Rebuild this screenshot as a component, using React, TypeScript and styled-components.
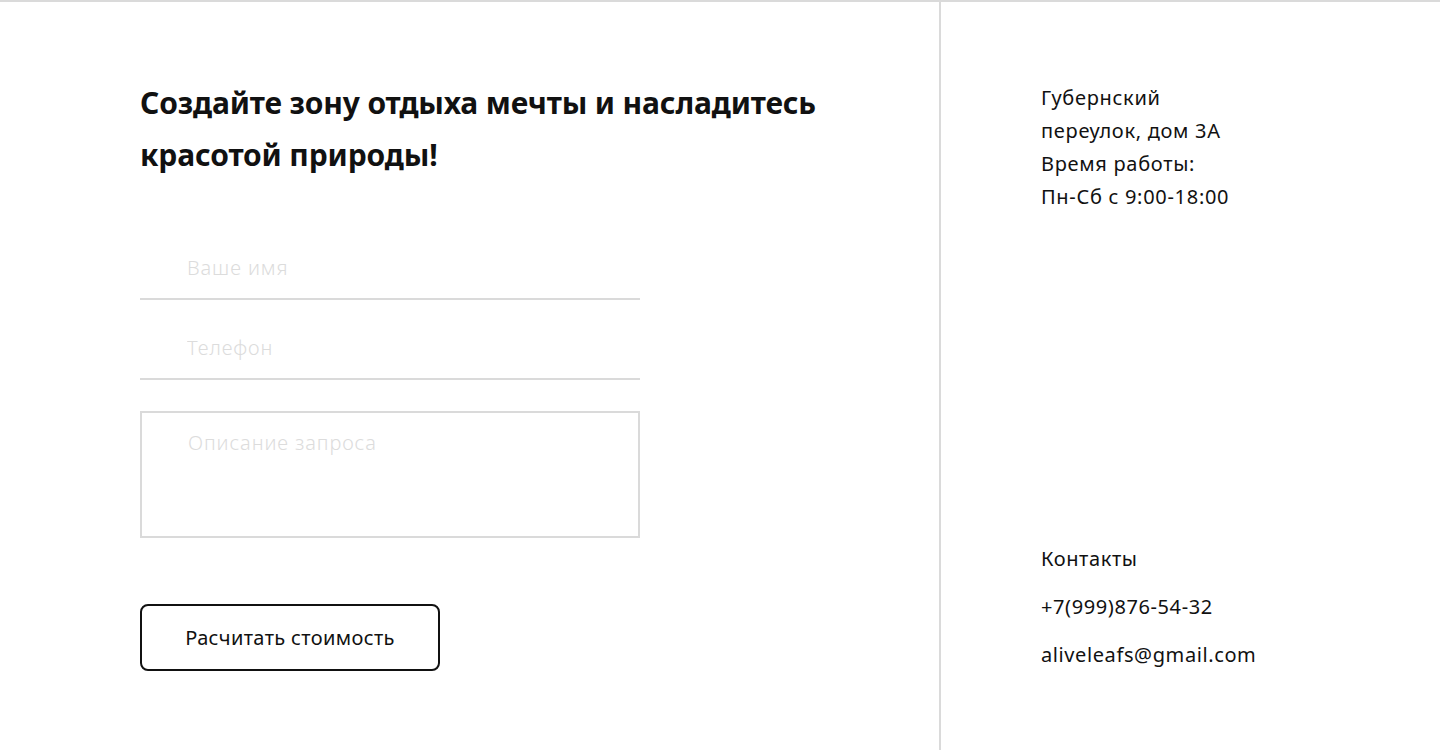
import React from "react";
import styled, { createGlobalStyle } from "styled-components";

const GlobalStyle = createGlobalStyle`
  html, body {
    margin: 0;
    padding: 0;
    background: #fff;
    font-family: "Noto Sans", "Open Sans", sans-serif;
    color: #111;
  }
  * {
    box-sizing: border-box;
  }
`;

const Page = styled.div`
  display: grid;
  grid-template-columns: 941px 1fr;
  height: 750px;
  border-top: 2px solid #dadada;
`;

const FormSection = styled.section`
  border-right: 2px solid #dadada;
  padding: 75px 0 0 140px;
`;

const Title = styled.h2`
  margin: 0 0 55px;
  font-size: 30px;
  font-weight: 700;
  line-height: 52px;
  letter-spacing: -0.15px;
  max-width: 700px;
  color: #111;
`;

const Form = styled.form`
  display: flex;
  flex-direction: column;
  width: 500px;
`;

const Field = styled.input`
  height: 64px;
  padding: 0 0 0 47px;
  border: none;
  border-bottom: 2px solid #dadada;
  font-family: inherit;
  font-size: 20px;
  font-weight: 300;
  letter-spacing: 0.9px;
  outline: none;
  background: transparent;

  & + & {
    margin-top: 16px;
  }

  &::placeholder {
    color: #dcdcdc;
  }
`;

const Area = styled.textarea`
  margin-top: 31px;
  height: 127px;
  padding: 17px 0 0 46px;
  border: 2px solid #dadada;
  font-family: inherit;
  font-size: 20px;
  font-weight: 300;
  letter-spacing: 0.9px;
  line-height: 26px;
  resize: none;
  outline: none;

  &::placeholder {
    color: #dcdcdc;
  }
`;

const Submit = styled.button`
  margin-top: 66px;
  width: 300px;
  height: 67px;
  border: 2px solid #111;
  border-radius: 8px;
  background: #fff;
  font-family: inherit;
  font-size: 20px;
  letter-spacing: 0.35px;
  color: #111;
  cursor: pointer;
`;

const InfoSection = styled.aside`
  display: flex;
  flex-direction: column;
  justify-content: space-between;
  padding: 79px 0 79px 100px;
`;

const Address = styled.p`
  margin: 0;
  max-width: 215px;
  font-size: 20px;
  line-height: 33px;
  letter-spacing: 0.7px;
`;

const Contacts = styled.div`
  display: flex;
  flex-direction: column;
  gap: 15px;
  font-size: 20px;
  line-height: 33px;
  letter-spacing: 0.6px;
`;

const ContactLine = styled.span`
  display: block;
`;

export default function App() {
  return (
    <>
      <GlobalStyle />
      <Page>
        <FormSection>
          <Title>Создайте зону отдыха мечты и насладитесь красотой природы!</Title>
          <Form onSubmit={(e) => e.preventDefault()}>
            <Field type="text" placeholder="Ваше имя" />
            <Field type="tel" placeholder="Телефон" />
            <Area placeholder="Описание запроса" />
            <Submit type="submit">Расчитать стоимость</Submit>
          </Form>
        </FormSection>
        <InfoSection>
          <Address>
            Губернский переулок, дом 3А
            <br />
            Время работы:
            <br />
            Пн-Сб с 9:00-18:00
          </Address>
          <Contacts>
            <ContactLine>Контакты</ContactLine>
            <ContactLine>+7(999)876-54-32</ContactLine>
            <ContactLine>aliveleafs@gmail.com</ContactLine>
          </Contacts>
        </InfoSection>
      </Page>
    </>
  );
}
